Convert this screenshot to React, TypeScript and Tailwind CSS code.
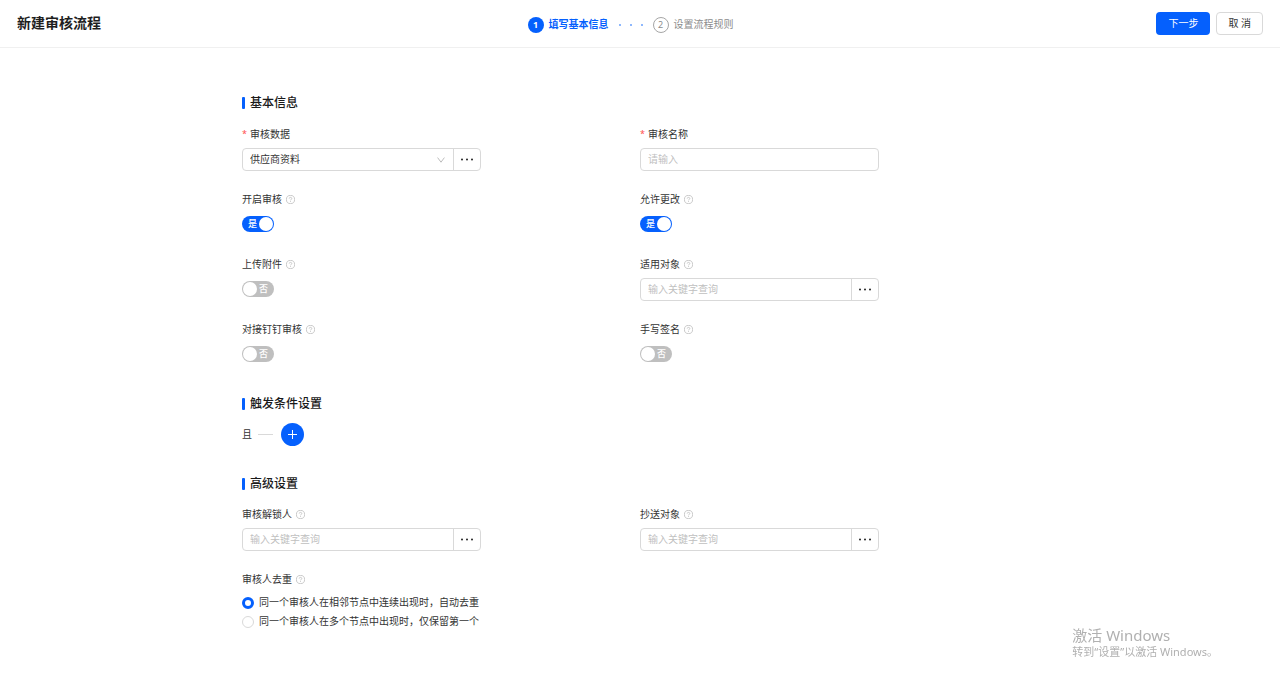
import { useId, useState } from "react";
import type { ReactNode } from "react";
import clsx from "clsx";

function HelpIcon() {
  return (
    <svg className="size-[9px] text-[#b8b8b8]" viewBox="0 0 18 18" fill="none" stroke="currentColor" strokeWidth="1.5" aria-hidden="true">
      <circle cx="9" cy="9" r="8.2" />
      <path d="M6.4 7.1c0-1.4 1.1-2.4 2.6-2.4s2.6 1 2.6 2.3c0 1.8-2.6 2-2.6 3.8" />
      <path d="M9 12.2v1.7" />
    </svg>
  );
}

function DotsIcon() {
  return (
    <svg className="h-[3px] w-3 text-[#222]" viewBox="0 0 12 3" fill="currentColor" aria-hidden="true">
      <circle cx="1" cy="1.5" r="1" />
      <circle cx="6" cy="1.5" r="1" />
      <circle cx="11" cy="1.5" r="1" />
    </svg>
  );
}

function Section({ title, className, children }: { title: string; className?: string; children: ReactNode }) {
  return (
    <section className={className}>
      <h2 className="flex items-center gap-[5px] text-xs leading-5 font-medium text-[#1a1a1a]">
        <span className="h-3 w-[3px] rounded-[1px] bg-[#0560fd]"></span>
        {title}
      </h2>
      {children}
    </section>
  );
}

type FieldProps = {
  label: string;
  htmlFor: string;
  required?: boolean;
  help?: boolean;
  children: ReactNode;
};

function Field({ label, htmlFor, required, help, children }: FieldProps) {
  return (
    <div>
      <div className="flex items-center leading-5">
        {required && <span className="mr-[3px] text-[9px] text-[#ff4d4f]">*</span>}
        <label htmlFor={htmlFor} className="mr-1">{label}</label>
        {help && <HelpIcon />}
      </div>
      <div className="mt-1 flex h-[23px] w-3/5 items-start">{children}</div>
    </div>
  );
}

function SwitchField({ label, defaultOn = false }: { label: string; defaultOn?: boolean }) {
  const id = useId();
  const [on, setOn] = useState(defaultOn);

  return (
    <Field label={label} htmlFor={id} help>
      <button
        id={id}
        type="button"
        role="switch"
        aria-checked={on}
        onClick={() => setOn(!on)}
        className={clsx(
          "mt-[3px] flex h-4 w-8 items-center justify-between rounded-full text-[9px] leading-4 text-white",
          on ? "flex-row-reverse bg-[#0560fd] pr-px pl-[6px]" : "bg-[#bfbfbf] pr-[6px] pl-px"
        )}
      >
        <span className="size-[14px] rounded-full bg-white"></span>
        <span className="font-medium">{on ? "是" : "否"}</span>
      </button>
    </Field>
  );
}

function MoreButton({ label }: { label: string }) {
  return (
    <button
      type="button"
      aria-label={label}
      className="flex w-[27px] shrink-0 items-center justify-center border-l border-[#d9d9d9]"
    >
      <DotsIcon />
    </button>
  );
}

const boxClass = "flex h-full w-full overflow-hidden rounded-[4px] border border-[#d9d9d9]";
const inputClass = "min-w-0 flex-1 px-[7px] outline-none placeholder:text-[#bfbfbf]";

function SearchField({ label }: { label: string }) {
  const id = useId();

  return (
    <Field label={label} htmlFor={id} help>
      <div className={boxClass}>
        <input id={id} type="text" placeholder="输入关键字查询" className={inputClass} />
        <MoreButton label={`选择${label}`} />
      </div>
    </Field>
  );
}

function Header() {
  return (
    <header className="grid h-12 grid-cols-[1fr_auto_1fr] items-center border-b border-[#f0f0f0] px-[17px]">
      <h1 className="pb-[2px] text-sm font-bold text-[#1f1f1f]">新建审核流程</h1>
      <ol className="flex items-center pt-[2px] pr-[19px]">
        <li className="flex items-center gap-[5px] font-bold text-[#0560fd]">
          <span className="flex size-4 items-center justify-center rounded-full bg-[#0560fd] text-[9px] text-white">1</span>
          填写基本信息
        </li>
        <li className="mx-[10px] flex w-6 items-center justify-between" aria-hidden="true">
          <span className="size-[2px] rounded-full bg-[#69a0fd]"></span>
          <span className="size-[2px] rounded-full bg-[#69a0fd]"></span>
          <span className="size-[2px] rounded-full bg-[#69a0fd]"></span>
        </li>
        <li className="flex items-center gap-[5px] text-[#8c8c8c]">
          <span className="flex size-4 items-center justify-center rounded-full border border-[#a6a6a6] text-[9px]">2</span>
          设置流程规则
        </li>
      </ol>
      <div className="flex justify-end gap-[6px]">
        <button type="button" className="h-[23px] rounded-[4px] bg-[#0560fd] px-3 text-white">
          下一步
        </button>
        <button type="button" className="h-[23px] rounded-[4px] border border-[#d9d9d9] px-[11px]">
          取 消
        </button>
      </div>
    </header>
  );
}

const dedupeOptions = [
  { value: "adjacent", text: "同一个审核人在相邻节点中连续出现时，自动去重" },
  { value: "first", text: "同一个审核人在多个节点中出现时，仅保留第一个" },
];

export default function App() {
  const [dedupe, setDedupe] = useState("adjacent");

  return (
    <div className="min-h-screen bg-white font-['Noto_Sans','Noto_Sans_CJK_SC',sans-serif] text-[10px] text-[#333]">
      <Header />
      <main className="mx-auto max-w-[796px] pt-[45px]">
        <Section title="基本信息">
          <div className="mt-[11px] grid grid-cols-2 gap-y-[18px]">
            <Field label="审核数据" htmlFor="data" required>
              <div className={boxClass}>
                <div className="relative flex-1">
                  <select id="data" className="h-full w-full appearance-none px-[7px] outline-none">
                    <option>供应商资料</option>
                  </select>
                  <svg
                    className="pointer-events-none absolute top-2 right-2 h-[6px] w-2 text-[#b5b5b5]"
                    viewBox="0 0 8 6"
                    fill="none"
                    stroke="currentColor"
                    strokeWidth="0.9"
                    aria-hidden="true"
                  >
                    <path d="M0.6 0.6 4 5.2 7.4 0.6" />
                  </svg>
                </div>
                <MoreButton label="选择审核数据" />
              </div>
            </Field>
            <Field label="审核名称" htmlFor="name" required>
              <div className={boxClass}>
                <input id="name" type="text" placeholder="请输入" className={inputClass} />
              </div>
            </Field>
            <SwitchField label="开启审核" defaultOn />
            <SwitchField label="允许更改" defaultOn />
            <SwitchField label="上传附件" />
            <SearchField label="适用对象" />
            <SwitchField label="对接钉钉审核" />
            <SwitchField label="手写签名" />
          </div>
        </Section>

        <Section title="触发条件设置" className="mt-7">
          <div className="mt-[9px] flex items-center">
            <span>且</span>
            <span className="mr-2 ml-[6px] h-px w-[15px] bg-[#d9d9d9]"></span>
            <button
              type="button"
              aria-label="添加条件"
              className="flex size-[23px] items-center justify-center rounded-full bg-[#0560fd] text-white"
            >
              <svg className="size-[9px]" viewBox="0 0 9 9" stroke="currentColor" aria-hidden="true">
                <path d="M4.5 0v9M0 4.5h9" />
              </svg>
            </button>
          </div>
        </Section>

        <Section title="高级设置" className="mt-7">
          <div className="mt-[10px] grid grid-cols-2 gap-y-[18px]">
            <SearchField label="审核解锁人" />
            <SearchField label="抄送对象" />
            <fieldset>
              <legend className="flex items-center gap-1 leading-5">
                审核人去重
                <HelpIcon />
              </legend>
              <div className="mt-1">
                {dedupeOptions.map((o) => (
                  <label key={o.value} className="flex h-[19px] items-center gap-[5px]">
                    <input
                      type="radio"
                      name="dedupe"
                      value={o.value}
                      checked={dedupe === o.value}
                      onChange={() => setDedupe(o.value)}
                      className="size-3 appearance-none rounded-full border border-[#d9d9d9] checked:border-[3px] checked:border-[#0560fd]"
                    />
                    {o.text}
                  </label>
                ))}
              </div>
            </fieldset>
          </div>
        </Section>
      </main>

      <div className="pointer-events-none fixed right-[62px] bottom-[34px] text-[#b0b0b0]">
        <p className="text-[15px] leading-[18px]">激活 Windows</p>
        <p className="text-[11px] leading-4">转到“设置”以激活 Windows。</p>
      </div>
    </div>
  );
}
